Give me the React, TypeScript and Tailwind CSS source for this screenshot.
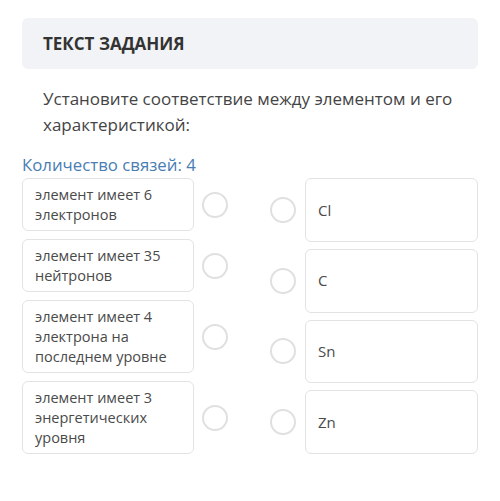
import React from "react";

const left = [
  "элемент имеет 6 электронов",
  "элемент имеет 35 нейтронов",
  "элемент имеет 4 электрона на последнем уровне",
  "элемент имеет 3 энергетических уровня",
];
const right = ["Cl", "C", "Sn", "Zn"];

function Circle() {
  return <div className="w-[26px] h-[26px] rounded-full border-[2.5px] border-[#e0e0e0] bg-white shrink-0" />;
}

export default function App() {
  return (
    <div className="w-[500px] h-[501px] bg-white px-[22px] pt-[18px] text-[#3d3d3d]" style={{ fontFamily: '"Open Sans", sans-serif' }}>
      <div className="h-[51px] rounded-md bg-[#f2f3f6] flex items-center px-[21px]">
        <span className="text-[17px] font-bold text-[#333]">ТЕКСТ ЗАДАНИЯ</span>
      </div>
      <p className="mt-[17px] pl-[21px] pr-[4px] text-[17px] leading-[26px] text-[#444]">
        Установите соответствие между элементом и его характеристикой:
      </p>
      <div className="mt-[16px] text-[16.8px] leading-[22px] text-[#4a7db3]">Количество связей: 4</div>
      <div className="mt-[2px] flex">
        <div className="flex flex-col gap-[8px]">
          {left.map((t, i) => (
            <div key={i} className="flex items-center">
              <div className="w-[172px] rounded-md border border-[#e3e3e3] px-[12px] py-[5.5px] text-[14.5px] leading-[20px] text-[#4a4a4a]">
                {t}
              </div>
              <div className="ml-[8px]">
                <Circle />
              </div>
            </div>
          ))}
        </div>
        <div className="ml-[42px] flex flex-col gap-[7px] flex-1">
          {right.map((t, i) => (
            <div key={i} className="flex items-center flex-1">
              <Circle />
              <div className="ml-[9px] flex-1 self-stretch rounded-md border border-[#e3e3e3] px-[12px] flex items-center text-[15px] text-[#4a4a4a]">
                {t}
              </div>
            </div>
          ))}
        </div>
      </div>
    </div>
  );
}
